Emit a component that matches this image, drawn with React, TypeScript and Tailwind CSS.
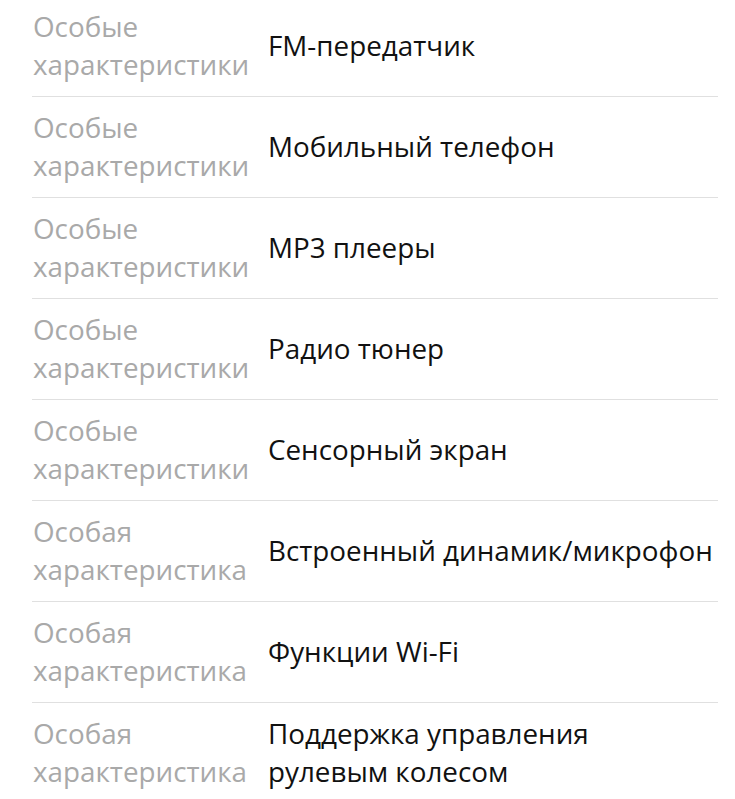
const rows: { label: string; value: string }[] = [
  { label: "Особые характеристики", value: "FM-передатчик" },
  { label: "Особые характеристики", value: "Мобильный телефон" },
  { label: "Особые характеристики", value: "MP3 плееры" },
  { label: "Особые характеристики", value: "Радио тюнер" },
  { label: "Особые характеристики", value: "Сенсорный экран" },
  { label: "Особая характеристика", value: "Встроенный динамик/микрофон" },
  { label: "Особая характеристика", value: "Функции Wi-Fi" },
  { label: "Особая характеристика", value: "Поддержка управления\nрулевым колесом" },
];

export default function App() {
  return (
    <div
      className="bg-white w-[735px] h-[799px] overflow-hidden pl-[32px] pr-[17px]"
      style={{ fontFamily: '"Open Sans", "Noto Sans", sans-serif' }}
    >
      <div className="-mt-[4px]">
        {rows.map((row, i) => (
          <div
            key={i}
            className="flex items-center border-b border-[#e0e0e0] pt-[11px] pb-[13px] text-[27.8px] leading-[38px]"
          >
            <div className="w-[236px] shrink-0 text-[#a9a9a9] pl-px">{row.label}</div>
            <div className="flex-1 text-[#111111] whitespace-pre-line">{row.value}</div>
          </div>
        ))}
      </div>
    </div>
  );
}
